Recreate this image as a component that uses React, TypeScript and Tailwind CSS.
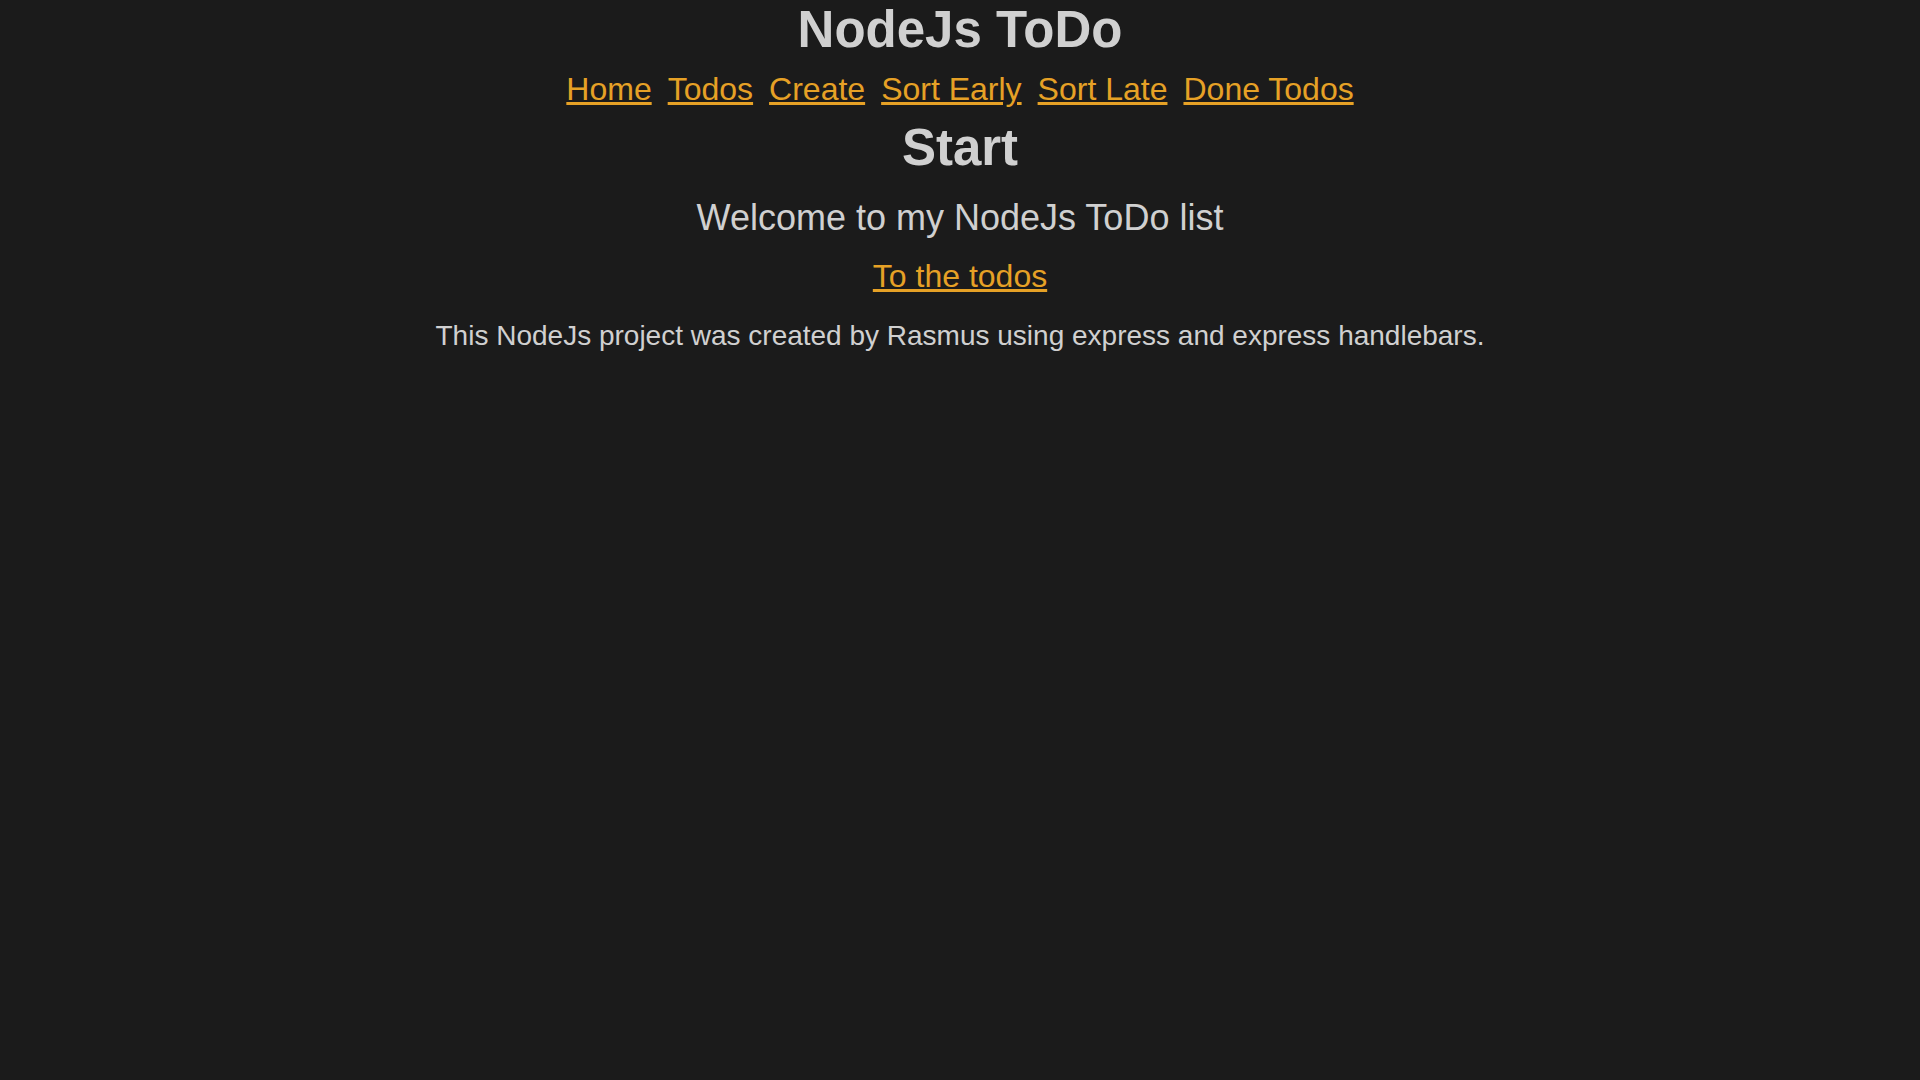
import React from "react";

const links = ["Home", "Todos", "Create", "Sort Early", "Sort Late", "Done Todos"];

const App = () => {
  return (
    <div className="min-h-screen bg-[#1b1b1b] text-center font-['Liberation_Sans',Arial,sans-serif] text-[#d0d0d0]">
      <h1 className="text-[51px] font-bold leading-[60px]">NodeJs ToDo</h1>
      <nav className="mt-[9px] flex justify-center gap-[16px] text-[32px] leading-[40px]">
        {links.map((l) => (
          <a key={l} href="#" className="text-[#e6a126] underline">
            {l}
          </a>
        ))}
      </nav>
      <h1 className="mt-[9px] text-[51px] font-bold leading-[60px]">Start</h1>
      <p className="mt-[18px] text-[36px] leading-[44px]">Welcome to my NodeJs ToDo list</p>
      <div className="mt-[16px] text-[32px] leading-[40px]">
        <a href="#" className="text-[#e6a126] underline">
          To the todos
        </a>
      </div>
      <p className="mt-[23px] text-[28px] leading-[34px]">
        This NodeJs project was created by Rasmus using express and express handlebars.
      </p>
    </div>
  );
};

export default App;
